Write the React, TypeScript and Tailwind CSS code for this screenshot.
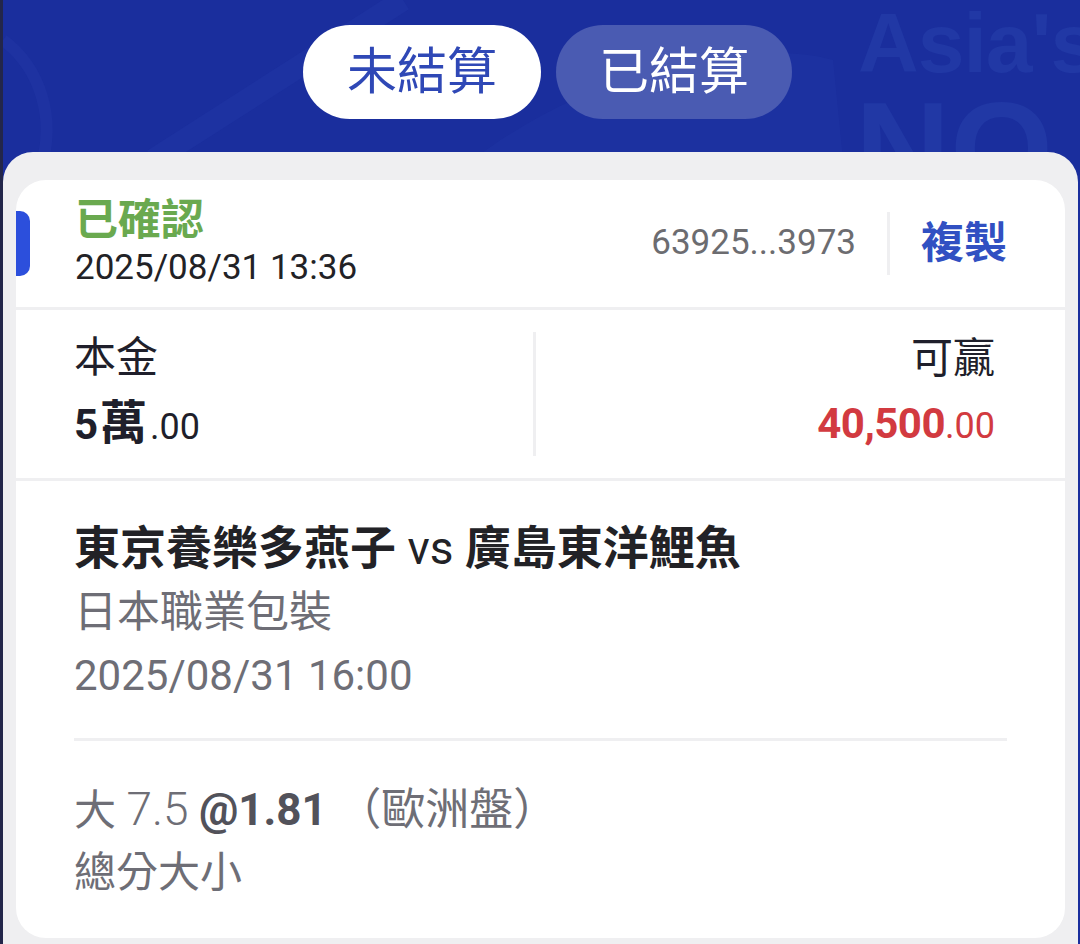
import React from 'react';

const font = { fontFamily: "Roboto, 'Noto Sans CJK TC', sans-serif" };

const Divider = () => <div className="h-[3px] bg-[#efeff1]" />;

export default function App() {
  return (
    <div
      className="relative w-[1080px] h-[944px] overflow-hidden bg-[#1a2e9d] border-l-[3px] border-[#23264a] flex flex-col"
      style={font}
    >
      {/* background decoration */}
      <svg className="absolute inset-0 pointer-events-none" width="1080" height="160" viewBox="0 0 1080 160">
        <path d="M0 40 C 40 70, 50 120, 40 160" stroke="#2136a6" strokeWidth="12" fill="none" opacity="0.5" />
        <path d="M150 160 L 400 0" stroke="#2036a6" strokeWidth="22" fill="none" opacity="0.5" />
        <path d="M470 160 C 600 60, 760 40, 830 60 L 840 160 Z" fill="#2036a6" opacity="0.4" />
      </svg>
      <div className="absolute left-[855px] top-[12px] text-[84px] font-bold leading-[0.75] text-[#2138a5] whitespace-nowrap tracking-[-1px]" style={{ fontFamily: "'Liberation Sans', Arial, sans-serif" }}>
        Asia's
      </div>
      <div className="absolute left-[852px] top-[99px] text-[132px] font-bold leading-[0.75] text-[#2138a5] whitespace-nowrap" style={{ fontFamily: "'Liberation Sans', Arial, sans-serif" }}>
        NO
      </div>

      {/* tabs */}
      <div className="relative h-[152px] flex justify-center items-start pt-[25px] gap-[15px] pl-[12px]">
        <div className="w-[238px] h-[94px] rounded-full bg-white flex items-center justify-center text-[50px] text-[#2f48b6] leading-none">
          未結算
        </div>
        <div className="w-[236px] h-[94px] rounded-full bg-[#4a5bb2] flex items-center justify-center text-[50px] text-white leading-none">
          已結算
        </div>
      </div>

      {/* panel */}
      <div className="relative flex-1 bg-[#efeff1] rounded-t-[30px] mr-[2px] pt-[28px] px-[13px]">
        <div className="bg-white rounded-[30px] h-[758px] flex flex-col overflow-hidden">
          {/* status row */}
          <div className="h-[127px] flex items-center">
            <div className="w-[14px] h-[65px] rounded-r-[10px] bg-[#2c4fdc]" />
            <div className="ml-[45px] flex flex-col">
              <div className="text-[43px] leading-[48px] font-bold text-[#6aa94f]">已確認</div>
              <div className="text-[35px] leading-[48px] text-[#222226]">2025/08/31 13:36</div>
            </div>
            <div className="ml-auto flex items-center pr-[58px]">
              <span className="text-[35px] text-[#6c6c70]">63925...3973</span>
              <div className="w-[3px] h-[63px] bg-[#efeff1] mx-[31px]" />
              <span className="text-[43px] font-bold text-[#3150c2]">複製</span>
            </div>
          </div>
          <Divider />

          {/* stake / win */}
          <div className="h-[168px] flex items-center">
            <div className="flex-1 pl-[58px] pt-[2px]">
              <div className="text-[42px] leading-[65px] text-[#1f1f2b]">本金</div>
              <div className="leading-[65px] text-[#1f1f2b] whitespace-nowrap">
                <span className="text-[42px] font-bold">5</span>
                <span className="text-[47px] font-bold ml-[2px]">萬</span>
                <span className="text-[36px] ml-[3px]">.00</span>
              </div>
            </div>
            <div className="w-[3px] h-[124px] bg-[#efeff1]" />
            <div className="flex-1 pr-[70px] pt-[2px] text-right">
              <div className="text-[42px] leading-[65px] text-[#1f1f2b]">可贏</div>
              <div className="leading-[65px] text-[#d23a40] whitespace-nowrap">
                <span className="text-[42px] font-bold tracking-[-0.5px]">40,500</span>
                <span className="text-[36px]">.00</span>
              </div>
            </div>
          </div>
          <Divider />

          {/* match */}
          <div className="px-[58px] pt-[35px]">
            <div className="text-[46px] leading-[64px] text-[#222226] whitespace-nowrap">
              <span className="font-bold">東京養樂多燕子</span> vs <span className="font-bold">廣島東洋鯉魚</span>
            </div>
            <div className="text-[43px] leading-[64px] text-[#6e6e76]">日本職業包裝</div>
            <div className="text-[42px] leading-[64px] text-[#6e6e76]">2025/08/31 16:00</div>
            <div className="mt-[30px] h-[3px] bg-[#efeff1]" />
          </div>

          {/* bet */}
          <div className="px-[58px] pt-[37px]">
            <div className="text-[42px] leading-[62px] text-[#6e6e76] whitespace-nowrap">
              大 <span className="font-light text-[46px]">7.5</span>{' '}
              <span className="font-bold text-[44px] text-[#52525a]">@1.81</span>{' '}
              <span className="text-[44px]">（歐洲盤）</span>
            </div>
            <div className="text-[42px] leading-[62px] text-[#6e6e76]">總分大小</div>
          </div>
        </div>
      </div>
    </div>
  );
}
